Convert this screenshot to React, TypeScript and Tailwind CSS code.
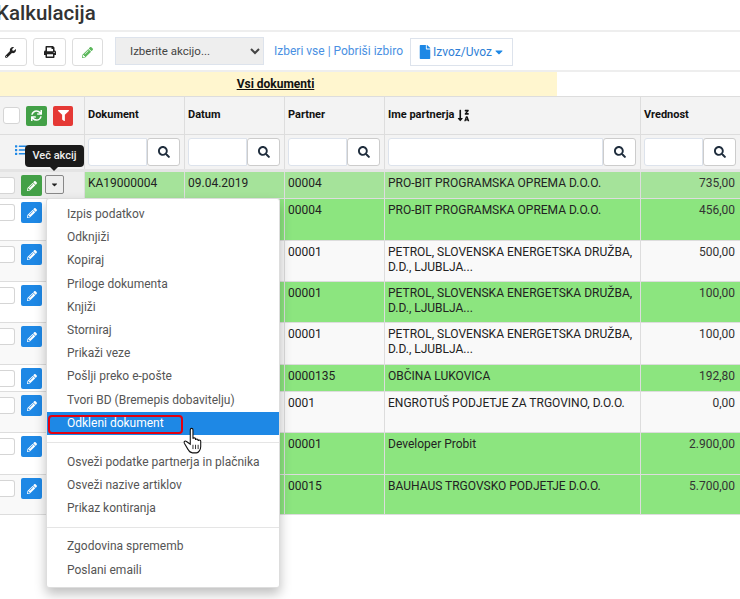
import { FaCaretDown, FaFile, FaFilter, FaList, FaPencilAlt, FaPrint, FaSearch, FaSortAlphaDownAlt, FaSync, FaWrench } from 'react-icons/fa';

const GRID = 'grid grid-cols-[85px_100px_100px_100px_256px_120px]';

const rows = [
  { h: 'h-[27px]', bg: 'bg-[#a5e39a]', side: 'bg-[#eeeeee]', doc: 'KA19000004', date: '09.04.2019', partner: '00004', name: 'PRO-BIT PROGRAMSKA OPREMA D.O.O.', value: '735,00' },
  { h: 'h-[42px]', bg: 'bg-[#8ce57f]', side: 'bg-white', doc: '', date: '', partner: '00004', name: 'PRO-BIT PROGRAMSKA OPREMA D.O.O.', value: '456,00' },
  { h: 'h-[41px]', bg: 'bg-[#f9f9f9]', side: 'bg-[#f9f9f9]', doc: '', date: '', partner: '00001', name: 'PETROL, SLOVENSKA ENERGETSKA DRUŽBA, D.D., LJUBLJA...', value: '500,00' },
  { h: 'h-[41px]', bg: 'bg-[#8ce57f]', side: 'bg-white', doc: '', date: '', partner: '00001', name: 'PETROL, SLOVENSKA ENERGETSKA DRUŽBA, D.D., LJUBLJA...', value: '100,00' },
  { h: 'h-[42px]', bg: 'bg-[#f9f9f9]', side: 'bg-[#f9f9f9]', doc: '', date: '', partner: '00001', name: 'PETROL, SLOVENSKA ENERGETSKA DRUŽBA, D.D., LJUBLJA...', value: '100,00' },
  { h: 'h-[27px]', bg: 'bg-[#8ce57f]', side: 'bg-white', doc: '', date: '', partner: '0000135', name: 'OBČINA LUKOVICA', value: '192,80' },
  { h: 'h-[41px]', bg: 'bg-[#f9f9f9]', side: 'bg-[#f9f9f9]', doc: '', date: '', partner: '0001', name: 'ENGROTUŠ PODJETJE ZA TRGOVINO, D.O.O.', value: '0,00' },
  { h: 'h-[42px]', bg: 'bg-[#8ce57f]', side: 'bg-white', doc: '', date: '', partner: '00001', name: 'Developer Probit', value: '2.900,00' },
  { h: 'h-[40px]', bg: 'bg-[#8ce57f]', side: 'bg-[#f9f9f9]', doc: '', date: '', partner: '00015', name: 'BAUHAUS TRGOVSKO PODJETJE D.O.O.', value: '5.700,00' },
];

const menuGroups = [
  ['Izpis podatkov', 'Odknjiži', 'Kopiraj', 'Priloge dokumenta', 'Knjiži', 'Storniraj', 'Prikaži veze', 'Pošlji preko e-pošte', 'Tvori BD (Bremepis dobavitelju)', 'Odkleni dokument'],
  ['Osveži podatke partnerja in plačnika', 'Osveži nazive artiklov', 'Prikaz kontiranja'],
  ['Zgodovina sprememb', 'Poslani emaili'],
];

function ToolButton({ children, width }: { children: React.ReactNode; width: string }) {
  return (
    <button className={`${width} h-[28px] bg-white border border-[#dddddd] rounded-[3px] flex items-center justify-center text-[12px] text-[#222222]`}>
      {children}
    </button>
  );
}

function SearchFilter() {
  return (
    <div className="flex h-[28px] w-full">
      <div className="flex-1 bg-white border border-[#dde3ec] rounded-l-[3px]" />
      <button className="w-[33px] bg-white border border-[#cccccc] rounded-[3px] flex items-center justify-center text-[12px] text-[#1f2d3d]">
        <FaSearch />
      </button>
    </div>
  );
}

function Checkbox() {
  return <div className="w-[17px] h-[17px] bg-white border border-[#d5d5d5] rounded-[3px]" />;
}

export default function App() {
  return (
    <div className="relative w-[740px] h-[599px] overflow-hidden bg-white font-['Roboto',sans-serif] text-[12px] text-[#222222]">
      <h1 className="h-[30px] -ml-[4px] text-[20.5px] leading-[27px] font-medium text-[#333333]">Kalkulacija</h1>

      <div className="h-[42px] border-t-2 border-b-2 border-[#eeeeee] pt-[6px] flex items-start">
        <div className="flex gap-[6px] -ml-[6px]">
          <ToolButton width="w-[33px]"><FaWrench className="text-[11px]" /></ToolButton>
          <ToolButton width="w-[33px]"><FaPrint /></ToolButton>
          <ToolButton width="w-[31px]"><FaPencilAlt className="text-[#5cb85c] text-[11px]" /></ToolButton>
        </div>
        <select className="ml-[12px] -mt-[1px] w-[149px] h-[28px] pl-[10px] bg-[#eeeeee] border border-[#dde3ec] text-[11.5px] text-[#444444]">
          <option>Izberite akcijo...</option>
        </select>
        <span className="ml-[10px] mt-[4px] text-[12px] text-[#4a90e2] whitespace-nowrap">Izberi vse | Pobriši izbiro</span>
        <button className="ml-[7px] w-[103px] h-[28px] bg-white border border-[#dde3ec] text-[12px] text-[#2f7fd6] flex items-center justify-center gap-[1px]">
          <FaFile className="text-[#1e88e5] text-[14px]" />
          Izvoz/Uvoz
          <FaCaretDown className="text-[#1e88e5] text-[12px]" />
        </button>
      </div>

      <div className="w-[557px] h-[24px] bg-[#fff6cf] flex items-center justify-center">
        <span className="-ml-[6px] font-bold underline text-[12px] text-[#111111]">Vsi dokumenti</span>
      </div>

      <div className={`${GRID} h-[38px] bg-[#f3f3f3] border-t border-[#dddddd] font-bold text-[#111111] text-[11px]`}>
        <div className="flex items-center pl-[3px] gap-[6px] border-r border-[#dddddd]">
          <Checkbox />
          <span className="w-[21px] h-[20px] bg-[#43a047] rounded-[2px] flex items-center justify-center text-white text-[11px]"><FaSync /></span>
          <span className="w-[20px] h-[20px] bg-[#e53935] rounded-[2px] flex items-center justify-center text-white text-[11px]"><FaFilter /></span>
        </div>
        <div className="flex items-center pl-[3px] border-r border-[#dddddd]">Dokument</div>
        <div className="flex items-center pl-[3px] border-r border-[#dddddd]">Datum</div>
        <div className="flex items-center pl-[3px] border-r border-[#dddddd]">Partner</div>
        <div className="flex items-center pl-[3px] gap-[3px] border-r border-[#dddddd]">
          Ime partnerja <FaSortAlphaDownAlt className="text-[13px]" />
        </div>
        <div className="flex items-center pl-[3px]">Vrednost</div>
      </div>

      <div className={`${GRID} h-[38px] bg-[#f3f3f3] border-t border-[#dddddd] border-b-[3px] border-b-[#e4e4e4]`}>
        <div className="flex items-start pt-[9px] pl-[15px] border-r border-[#dddddd]">
          <FaList className="text-[#1e88e5] text-[12px]" />
          <span className="ml-[2px] -mt-[2px] text-[#333333] font-bold text-[11px]">FILTRI</span>
        </div>
        <div className="pt-[3px] pl-[3px] pr-[4px] border-r border-[#dddddd]"><SearchFilter /></div>
        <div className="pt-[3px] pl-[3px] pr-[4px] border-r border-[#dddddd]"><SearchFilter /></div>
        <div className="pt-[3px] pl-[3px] pr-[4px] border-r border-[#dddddd]"><SearchFilter /></div>
        <div className="pt-[3px] pl-[3px] pr-[4px] border-r border-[#dddddd]"><SearchFilter /></div>
        <div className="pt-[3px] pl-[3px] pr-[25px]"><SearchFilter /></div>
      </div>

      {rows.map((row, i) => (
        <div key={i} className={`${GRID} ${row.h} border-b border-[#dddddd]`}>
          <div className={`${row.side} flex items-start pt-[3px] border-r border-[#dddddd]`}>
            <div className="mt-[2px] w-[15px] h-[17px] bg-white border border-[#d5d5d5] rounded-r-[3px] border-l-0" />
            <span className={`ml-[6px] w-[21px] h-[21px] ${i === 0 ? 'bg-[#43a047]' : 'bg-[#1e88e5]'} rounded-[2px] flex items-center justify-center text-white text-[10px]`}>
              <FaPencilAlt />
            </span>
            {i === 0 && (
              <span className="ml-[3px] w-[19px] h-[19px] bg-[#eeeeee] border border-[#888888] rounded-[2px] flex items-center justify-center text-[9px] text-[#222222]">
                <FaCaretDown />
              </span>
            )}
          </div>
          <div className={`${row.bg} pl-[3px] pt-[4px] leading-[15px] border-r border-[#dddddd]`}>{row.doc}</div>
          <div className={`${row.bg} pl-[3px] pt-[4px] leading-[15px] border-r border-[#dddddd]`}>{row.date}</div>
          <div className={`${row.bg} pl-[3px] pt-[4px] leading-[15px] border-r border-[#dddddd]`}>{row.partner}</div>
          <div className={`${row.bg} pl-[3px] pt-[4px] leading-[15px] border-r border-[#dddddd]`}>{row.name}</div>
          <div className={`${row.bg} pt-[4px] leading-[15px] pr-[26px] text-right text-[#333333]`}>{row.value}</div>
        </div>
      ))}

      {/* tooltip above the row actions */}
      <div className="absolute left-[25px] top-[145px] w-[59px] h-[22px] bg-[#1a1a1a] rounded-[4px] flex items-center justify-center text-[11px] font-medium text-[#eeeeee]">
        Več akcij
        <div className="absolute left-[25px] -bottom-[4px] w-0 h-0 border-x-[4px] border-x-transparent border-t-[4px] border-t-[#1a1a1a]" />
      </div>

      {/* dropdown menu */}
      <div className="absolute left-[46px] top-[198px] w-[234px] h-[390px] bg-white border border-[#dddddd] rounded-[3px] shadow-[0_6px_12px_rgba(0,0,0,0.25)] pt-[4px] text-[12px] text-[#555555]">
        {menuGroups.map((group, g) => (
          <div key={g} className={g === 1 ? 'border-t border-[#e5e5e5] mt-[7px] pt-[8px]' : g === 2 ? 'border-t border-[#e5e5e5] mt-[7px] pt-[7px]' : ''}>
            {group.map((item) => {
              const active = item === 'Odkleni dokument';
              return (
                <div key={item} className={`relative h-[23.2px] pl-[20px] leading-[22px] whitespace-nowrap ${active ? 'bg-[#1e88e5] text-white' : ''}`}>
                  {item}
                  {active && <div className="absolute left-[1px] top-[3px] w-[135px] h-[19px] border-[2.5px] border-[#e3000f] rounded-[4px]" />}
                </div>
              );
            })}
          </div>
        ))}
      </div>

      {/* hand cursor */}
      <svg className="absolute left-[182px] top-[427px]" width="23" height="28" viewBox="0 0 20 26">
        <path d="M7 2.5c0-1.6 2.5-1.6 2.5 0V11c0-1.2 2.4-1.2 2.4 0v1c0-1.2 2.4-1.2 2.4 0v1c0-1.2 2.4-1.2 2.4 0v5c0 3-2 6-4 6H9c-2 0-3-1-4-3l-3.500-6c-.8-1.500 1-2.600 2-1.500L7 16V2.500z" fill="#ffffff" stroke="#111111" strokeWidth="1" />
        <path d="M9.500 16.500v4M11.900 16.500v4M14.300 16.500v4" stroke="#111111" strokeWidth="0.8" />
      </svg>
    </div>
  );
}
